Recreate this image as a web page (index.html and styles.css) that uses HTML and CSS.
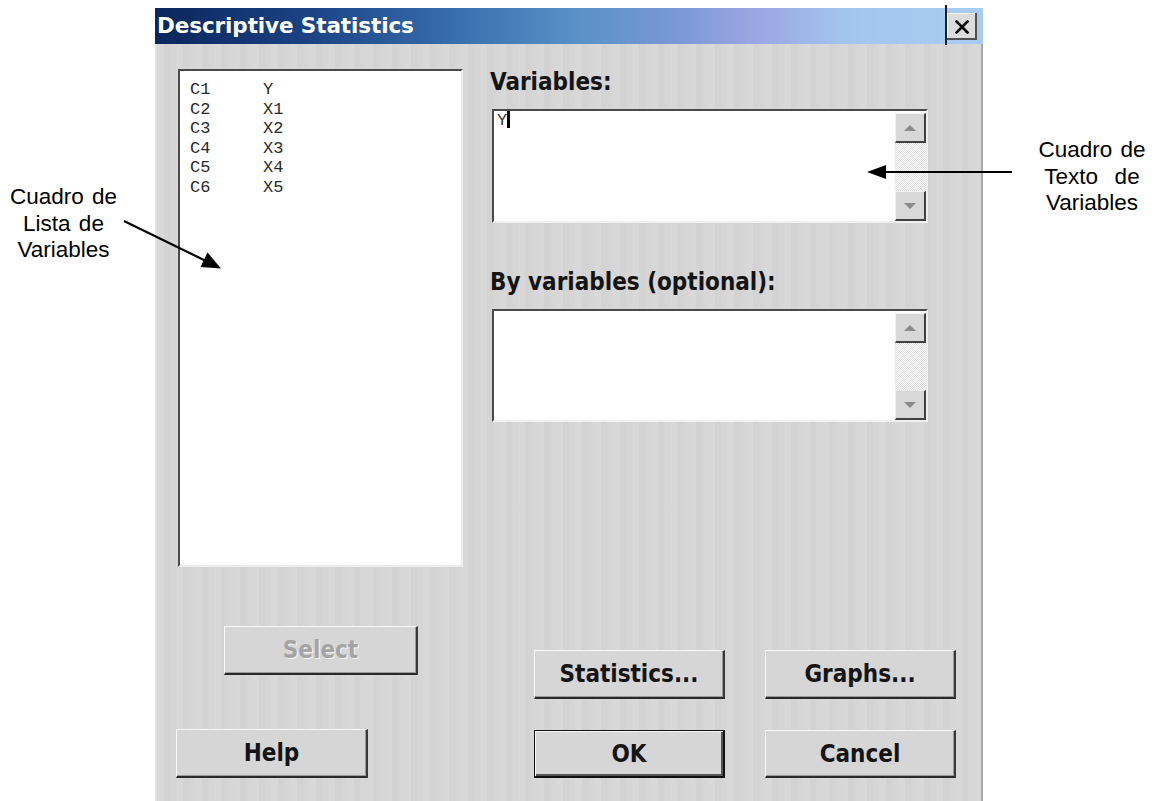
FILE: index.html
```html
<!DOCTYPE html>
<html lang="es">
<head>
<meta charset="utf-8">
<title>Descriptive Statistics</title>
<link rel="stylesheet" href="styles.css">
</head>
<body>
<div class="page">
  <div class="dialog">
    <div class="titlebar">
      <span class="title">Descriptive Statistics</span>
      <button class="close" type="button" aria-label="Close">
        <svg width="14" height="14" viewBox="0 0 14 14"><path d="M1.5 1.5 L12.5 12.5 M12.5 1.5 L1.5 12.5" stroke="#000" stroke-width="2.6" stroke-linecap="square"/></svg>
      </button>
    </div>
    <div class="dialog-body">
      <div class="col-left">
        <div class="listbox">
          <div class="list-row"><span class="col-id">C1</span><span>Y</span></div>
          <div class="list-row"><span class="col-id">C2</span><span>X1</span></div>
          <div class="list-row"><span class="col-id">C3</span><span>X2</span></div>
          <div class="list-row"><span class="col-id">C4</span><span>X3</span></div>
          <div class="list-row"><span class="col-id">C5</span><span>X4</span></div>
          <div class="list-row"><span class="col-id">C6</span><span>X5</span></div>
        </div>
        <button class="btn btn-select" type="button" disabled>Select</button>
        <button class="btn btn-help" type="button">Help</button>
      </div>
      <div class="col-right">
        <div class="field-label">Variables:</div>
        <div class="textbox">
          <div class="textbox-text">Y<span class="caret"></span></div>
          <div class="scrollbar">
            <div class="scroll-btn"><span class="tri tri-up"></span></div>
            <div class="scroll-track"></div>
            <div class="scroll-btn"><span class="tri tri-down"></span></div>
          </div>
        </div>
        <div class="field-label field-label-by">By variables (optional):</div>
        <div class="textbox textbox-by">
          <div class="textbox-text"></div>
          <div class="scrollbar">
            <div class="scroll-btn"><span class="tri tri-up"></span></div>
            <div class="scroll-track"></div>
            <div class="scroll-btn"><span class="tri tri-down"></span></div>
          </div>
        </div>
        <div class="btn-row btn-row-top">
          <button class="btn" type="button">Statistics...</button>
          <button class="btn" type="button">Graphs...</button>
        </div>
        <div class="btn-row btn-row-bottom">
          <button class="btn btn-default" type="button">OK</button>
          <button class="btn" type="button">Cancel</button>
        </div>
      </div>
    </div>
  </div>

  <div class="note note-left">Cuadro de<br>Lista de<br>Variables</div>
  <div class="note note-right">Cuadro de<br>Texto&nbsp; de<br>Variables</div>

  <svg class="arrows" width="1160" height="801" viewBox="0 0 1160 801">
    <line x1="124" y1="221" x2="206" y2="261" stroke="#000" stroke-width="2.2"/>
    <polygon points="221,268.5 200.5,267 207.5,252.5" fill="#000"/>
    <line x1="1012" y1="172" x2="882" y2="172" stroke="#000" stroke-width="2.2"/>
    <polygon points="867,172 886,165 886,179" fill="#000"/>
  </svg>
</div>
</body>
</html>
```

FILE: styles.css
```css
html, body {
  margin: 0;
  padding: 0;
  background: #ffffff;
}

.page {
  position: relative;
  width: 1160px;
  height: 801px;
  overflow: hidden;
}

/* ---------- dialog window ---------- */
.dialog {
  margin: 8px 0 0 155px;
  width: 828px;
  height: 793px;
  box-sizing: border-box;
  border-left: 2px solid #e2e2e2;
  border-right: 2px solid #a8a8a8;
  background-color: #d6d6d6;
  background-image:
    repeating-linear-gradient(90deg,
      rgba(255, 255, 255, 0.05) 0 7px,
      rgba(0, 0, 0, 0.015) 7px 13px,
      rgba(232, 190, 160, 0.05) 13px 15px,
      transparent 15px 19px);
  font-family: "DejaVu Sans Condensed", "DejaVu Sans", sans-serif;
  font-stretch: condensed;
  color: #141414;
}

.titlebar {
  display: flex;
  align-items: flex-start;
  height: 36px;
  margin-left: -2px;
  margin-right: -2px;
  background: linear-gradient(90deg,
    #0a265c 0px,
    #1a4283 150px,
    #386eae 300px,
    #5891c6 420px,
    #7a98d6 520px,
    #9ba6e2 600px,
    #a2c5ee 690px,
    #a9cdf2 830px);
}

.title {
  padding-left: 2px;
  font-family: "DejaVu Sans", sans-serif;
  font-stretch: normal;
  font-weight: bold;
  font-size: 21.5px;
  line-height: 36px;
  color: #ffffff;
  letter-spacing: -0.1px;
}

.close {
  margin: 5px 6px 0 auto;
  width: 32px;
  height: 27px;
  padding: 0;
  display: flex;
  align-items: center;
  justify-content: center;
  background: #dcdcdc;
  border: none;
  border-left: 2px solid #202020;
  box-shadow: inset -2px -2px #505050, inset 1px 1px #f4f4f4;
  position: relative;
}

.close::before {
  content: "";
  position: absolute;
  left: -2px;
  top: -8px;
  width: 2px;
  height: 40px;
  background: #202020;
}

.dialog-body {
  display: flex;
  padding: 25px 0 0 21px;
}

/* ---------- left column ---------- */
.col-left {
  display: flex;
  flex-direction: column;
  width: 285px;
}

.listbox {
  box-sizing: border-box;
  width: 285px;
  height: 498px;
  padding: 9px 10px;
  background: #ffffff;
  border-style: solid;
  border-width: 2px;
  border-color: #4a4a4a #ececec #ececec #4a4a4a;
  font-family: "Liberation Mono", "DejaVu Sans Mono", monospace;
  font-size: 17px;
  line-height: 19.6px;
  color: #2a2a2a;
}

.list-row {
  display: flex;
  height: 19.6px;
}

.col-id {
  width: 73px;
}

/* ---------- buttons ---------- */
.btn {
  box-sizing: border-box;
  width: 192px;
  height: 49px;
  padding: 0;
  background: #d6d6d6;
  border-style: solid;
  border-width: 1px 2px 2px 1px;
  border-color: #f8f8f8 #3a3a3a #2a2a2a #f8f8f8;
  box-shadow: inset -1px -1px #9a9a9a;
  font-family: "DejaVu Sans Condensed", "DejaVu Sans", sans-serif;
  font-stretch: condensed;
  font-weight: bold;
  font-size: 24px;
  line-height: 28px;
  color: #141414;
}

.btn-select {
  width: 194px;
  margin: 59px 0 0 46px;
  color: #a4a4a4;
  text-shadow: 1px 1px #f6f6f6;
}

.btn-help {
  margin: 54px 0 0 -2px;
}

.btn-default {
  border: 1px solid #101010;
  border-right-width: 2px;
  border-bottom-width: 2px;
  box-shadow: inset 1px 1px #f8f8f8, inset -2px -2px #555555;
}

/* ---------- right column ---------- */
.col-right {
  display: flex;
  flex-direction: column;
  margin: -1px 0 0 27px;
  width: 467px;
}

.field-label {
  font-weight: bold;
  font-size: 24px;
  line-height: 28px;
  height: 28px;
  margin-bottom: 13px;
}

.field-label-by {
  margin-top: 45px;
}

.textbox {
  display: flex;
  box-sizing: border-box;
  margin-left: 2px;
  width: 436px;
  height: 114px;
  background: #ffffff;
  border-style: solid;
  border-width: 2px;
  border-color: #4a4a4a #f0f0f0 #f0f0f0 #4a4a4a;
}

.textbox-by {
  height: 113px;
}

.textbox-text {
  flex: 1;
  padding-left: 3px;
  font-family: "Liberation Mono", "DejaVu Sans Mono", monospace;
  font-size: 17px;
  line-height: 19px;
  color: #333333;
}

.caret {
  display: inline-block;
  width: 3px;
  height: 17px;
  background: #000000;
  vertical-align: -3px;
}

.scrollbar {
  display: flex;
  flex-direction: column;
  width: 31px;
  margin: 2px 0 0;
}

.scroll-btn {
  box-sizing: border-box;
  height: 30px;
  display: flex;
  align-items: center;
  justify-content: center;
  background: #d8d8d8;
  border-style: solid;
  border-width: 1px 2px 2px 1px;
  border-color: #f2f2f2 #404040 #404040 #f2f2f2;
}

.scroll-track {
  flex: 1;
  background: repeating-conic-gradient(#ffffff 0 25%, #dedede 0 50%) 0 0 / 2px 2px;
}

.tri {
  width: 0;
  height: 0;
  border-left: 6px solid transparent;
  border-right: 6px solid transparent;
}

.tri-up {
  border-bottom: 6px solid #8a8a8a;
}

.tri-down {
  border-top: 6px solid #8a8a8a;
}

.btn-row {
  display: flex;
  gap: 40px;
  margin-left: 44px;
}

.btn-row .btn {
  width: 191px;
}

.btn-row-top {
  margin-top: 228px;
}

.btn-row-top .btn {
  height: 49px;
}

.btn-row-bottom {
  margin-top: 31px;
}

.btn-row-bottom .btn {
  height: 48px;
}

/* ---------- annotations ---------- */
.note {
  position: absolute;
  font-family: "Liberation Sans", Arial, sans-serif;
  font-size: 22.5px;
  line-height: 26.5px;
  text-align: center;
  color: #000000;
  word-spacing: 2px;
}

.note-left {
  left: 0;
  top: 184px;
  width: 127px;
}

.note-right {
  left: 1028px;
  top: 137px;
  width: 128px;
}

.arrows {
  position: absolute;
  left: 0;
  top: 0;
  pointer-events: none;
}
```
